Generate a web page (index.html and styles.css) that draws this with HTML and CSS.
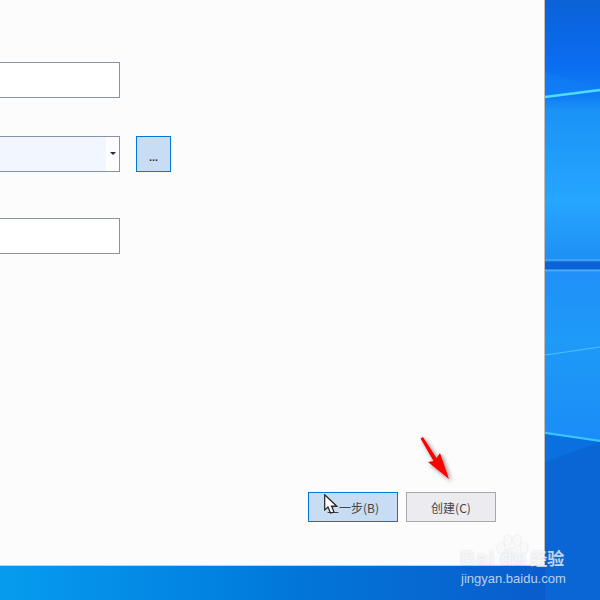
FILE: index.html
```html
<!DOCTYPE html>
<html lang="zh-CN">
<head>
  <meta charset="UTF-8" />
  <title>创建</title>
  <link rel="stylesheet" href="styles.css">
</head>
<body>
  <div class="desktop">
    <!-- Wallpaper streaks -->
    <svg class="wallpaper" width="600" height="600" viewBox="0 0 600 600">
      <path d="M545 72 L600 88 L600 90 L545 97 Z" fill="#1488f6" opacity="0.3"/>
      <path d="M545 97 L600 90" stroke="#4fdcff" stroke-width="2.5"/>
      <path d="M545 355 L600 347" stroke="#4cc0ff" stroke-width="1"/>
      <path d="M545 433 L600 441" stroke="#3cc4ff" stroke-width="2.5"/>
      <path d="M545 434 L600 442 L600 600 L545 600 Z" fill="#0a70e0"/>
      <path d="M545 462 L600 442 L600 600 L545 600 Z" fill="#0a62d0" opacity="0.7"/>
    </svg>

    <div class="dialog">
      <div class="form">
        <div class="row row-name">
          <div class="field"></div>
        </div>
        <div class="row row-path">
          <div class="field field-select">
            <div class="select-value"></div>
            <div class="select-arrow"></div>
          </div>
          <button class="browse-btn">...</button>
        </div>
        <div class="row row-extra">
          <div class="field"></div>
        </div>
      </div>
      <div class="footer">
        <button class="btn btn-active">上一步(B)</button>
        <button class="btn">创建(C)</button>
      </div>
    </div>

    <div class="taskbar"></div>

    <!-- Mouse pointer -->
    <svg class="pointer" width="16" height="22" viewBox="0 0 16 22">
      <path d="M0.7 0.7 L0.7 16 L4 13 L6.5 19 L10 18 L7.5 12 L12.5 12 Z" fill="#fff" stroke="#222" stroke-width="1.2"/>
    </svg>

    <!-- Red annotation arrow -->
    <svg class="red-arrow" width="44" height="60" viewBox="0 0 44 60">
      <defs>
        <filter id="arrowShadow" x="-30%" y="-30%" width="170%" height="170%">
          <feDropShadow dx="2" dy="2" stdDeviation="2" flood-color="#000" flood-opacity="0.5"/>
        </filter>
      </defs>
      <path d="M1.5 2.5 L4 1 L17.5 22 L21 17 L30 43 L9 26 L14.5 25 Z" fill="#ff0606" filter="url(#arrowShadow)"/>
    </svg>

    <!-- Watermark -->
    <div class="watermark">
      <svg class="paw" width="34" height="31" viewBox="0 0 38 36">
        <ellipse cx="6" cy="15" rx="4" ry="6" />
        <ellipse cx="14" cy="6" rx="4" ry="6" />
        <ellipse cx="25" cy="6" rx="4" ry="6" />
        <ellipse cx="33" cy="15" rx="4" ry="6" />
        <path d="M19 15 C13 15 12 21 8 25 C5 29 8 35 13 34 C17 33 21 33 25 34 C30 35 33 29 30 25 C26 21 25 15 19 15 Z"/>
      </svg>
      <div class="wm-brand"><span class="wm-bai">Bai</span><span class="wm-du">du</span><span class="wm-jy">经验</span></div>
      <div class="wm-url">jingyan.baidu.com</div>
    </div>
  </div>
</body>
</html>
```

FILE: styles.css
```css
/* Base */
body {
  margin: 0;
  font-family: "Noto Sans CJK SC", "Liberation Sans", sans-serif;
  color: #333;
}
.desktop {
  position: relative;
  width: 600px;
  height: 600px;
  overflow: hidden;
  display: flex;
  flex-direction: column;
  background: linear-gradient(180deg,
    #0a62d6 0,
    #0a6cf0 60px,
    #0f7cf6 96px,
    #1a92f6 110px,
    #26a6ff 200px,
    #1e90f4 259px,
    #5ab0f4 260px,
    #0a62d8 262px,
    #0a62d8 269px,
    #5ab4f8 270px,
    #2090f8 272px,
    #1e9af8 340px,
    #1a8ef6 432px);
}
.wallpaper {
  position: absolute;
  left: 0;
  top: 0;
}

/* Dialog */
.dialog {
  position: relative;
  width: 545px;
  height: 566px;
  box-sizing: border-box;
  flex: none;
  background: #fcfcfc;
  border-right: 1px solid #c4bdb8;
  border-bottom: 1px solid #c9ccd6;
  display: flex;
  flex-direction: column;
  justify-content: space-between;
  padding-top: 62px;
}
.row {
  display: flex;
  align-items: center;
  gap: 16px;
}
.row-path {
  margin-top: 38px;
}
.row-extra {
  margin-top: 46px;
}
.field {
  width: 120px;
  height: 36px;
  box-sizing: border-box;
  background: #fff;
  border: 1px solid #8593a3;
  border-left: none;
}
.field-select {
  display: flex;
  background: #fdfdfd;
}
.select-value {
  flex: 1;
  background: #f2f6fe;
}
.select-arrow {
  position: relative;
  width: 13px;
}
.select-arrow::after {
  content: "";
  position: absolute;
  left: 4px;
  top: 15px;
  border-left: 3px solid transparent;
  border-right: 3px solid transparent;
  border-top: 3px solid #222b3a;
}
.browse-btn {
  width: 35px;
  height: 36px;
  padding: 6px 0 0;
  box-sizing: border-box;
  background: #c8dcf3;
  border: 1px solid #0078d7;
  font-family: "Liberation Sans", sans-serif;
  font-size: 11px;
  font-weight: bold;
  line-height: 12px;
  color: #333;
}

/* Footer buttons */
.footer {
  display: flex;
  justify-content: flex-end;
  gap: 8px;
  padding: 0 48px 43px 0;
}
.btn {
  width: 90px;
  height: 30px;
  padding: 0;
  box-sizing: border-box;
  background: #ebebf0;
  border: 1px solid #a9a9a9;
  font-family: "Noto Sans CJK SC", sans-serif;
  font-size: 12px;
  color: #444;
}
.btn-active {
  background: #c8dcf3;
  border-color: #0078d7;
}

/* Strip along the bottom */
.taskbar {
  flex: 1;
  width: 545px;
  background: linear-gradient(90deg, #069cee 0, #0284e2 200px, #0276d8 300px, #0a5ccc 545px);
}

/* Overlays */
.pointer {
  position: absolute;
  left: 324px;
  top: 494px;
}
.red-arrow {
  position: absolute;
  left: 419px;
  top: 436px;
}
.watermark {
  position: absolute;
  left: 460px;
  top: 535px;
  width: 120px;
  height: 60px;
  color: rgba(255, 255, 255, 0.72);
}
.paw {
  position: absolute;
  left: 35px;
  top: 0;
  fill: rgba(255, 255, 255, 0.8);
  filter: drop-shadow(0 0 1px rgba(110, 120, 140, 0.3));
}
.wm-brand {
  position: absolute;
  left: 0;
  top: 11px;
  font-family: "Liberation Sans", sans-serif;
  font-weight: bold;
  font-size: 21px;
  line-height: 24px;
  letter-spacing: 1px;
  white-space: nowrap;
  text-shadow: 0 0 2px rgba(110, 120, 140, 0.28);
}
.wm-du {
  margin-left: 4px;
}
.wm-jy {
  margin-left: 3px;
  font-family: "Noto Sans CJK SC", sans-serif;
  font-size: 17px;
  letter-spacing: 0;
}
.wm-url {
  position: absolute;
  left: 1px;
  top: 36px;
  font-family: "Liberation Sans", sans-serif;
  font-size: 13px;
  line-height: 16px;
  white-space: nowrap;
}
```
